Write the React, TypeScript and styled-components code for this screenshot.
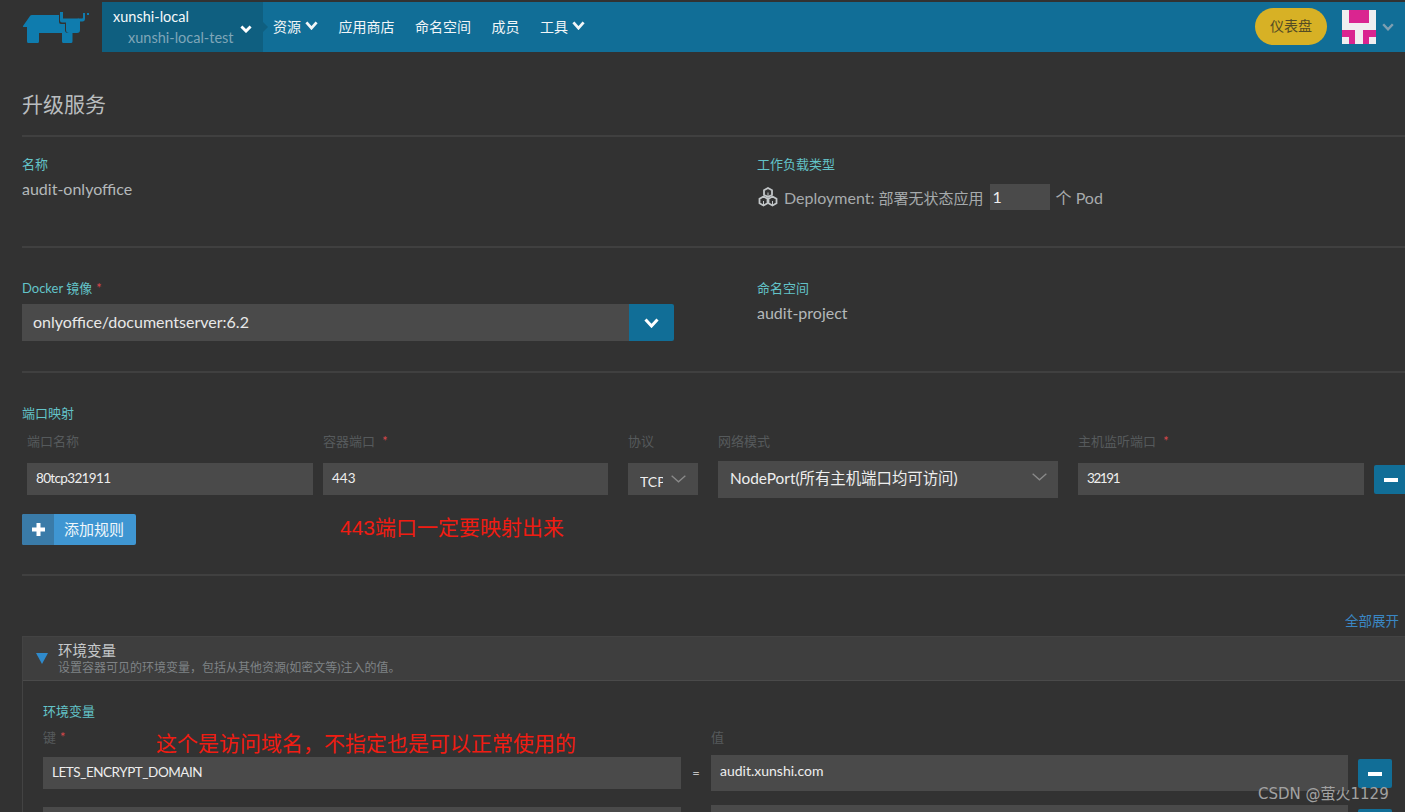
import React from 'react';
import styled, { createGlobalStyle } from 'styled-components';

const FONT = `Lato, "Noto Sans CJK SC", sans-serif`;

const GlobalStyle = createGlobalStyle`
  html, body {
    margin: 0;
    height: 812px;
    overflow: hidden;
    background: #323232;
    font-family: ${FONT};
  }
  * { box-sizing: border-box; }
`;

const Page = styled.div`
  position: relative;
  width: 1405px;
  height: 812px;
  overflow: hidden;
  padding-top: 2px;
`;

const Header = styled.header`
  display: flex;
  height: 50px;
`;

const LogoBox = styled.div`
  width: 102px;
  padding: 10px 0 0 22px;
`;

const Bar = styled.div`
  flex: 1;
  display: flex;
  align-items: center;
  background: #116e97;
  color: #fff;
  padding-right: 11px;
`;

const Cluster = styled.div`
  position: relative;
  width: 161px;
  height: 100%;
  background: #0f5f80;
  padding: 6px 0 0 11px;
  &::after {
    content: '';
    position: absolute;
    right: -5px;
    top: 20px;
    border-left: 5px solid #0f5f80;
    border-top: 5px solid transparent;
    border-bottom: 5px solid transparent;
  }
`;

const ClusterName = styled.div`
  font-size: 14.5px;
  line-height: 17px;
  color: #f4f8fa;
`;

const ProjectName = styled.div`
  font-size: 14.5px;
  line-height: 17px;
  margin: 4px 0 0 15px;
  color: #7fa6b8;
`;

const ClusterCaret = styled.span`
  position: absolute;
  left: 138px;
  top: 23px;
  display: flex;
  color: #fff;
`;

const Nav = styled.nav`
  display: flex;
  align-items: center;
  gap: 20.500px;
  margin: 0 0 3px 10px;
  flex: 1;
`;

const NavItem = styled.span`
  display: flex;
  align-items: center;
  gap: 4px;
  font-size: 14px;
  color: #f2f6f8;
`;

const Dashboard = styled.span`
  width: 72px;
  height: 37px;
  border-radius: 19px;
  background: #d7b125;
  color: #544c24;
  font-size: 14px;
  display: flex;
  align-items: center;
  justify-content: center;
  margin-bottom: 1px;
  padding-bottom: 3px;
`;

const AvatarBox = styled.div`
  width: 34px;
  height: 34px;
  margin-left: 15px;
`;

const UserCaret = styled.span`
  display: flex;
  margin-left: 6px;
  color: #7e9fb1;
`;

const Main = styled.main`
  padding-left: 22px;
`;

const TitleBlock = styled.div`
  height: 85px;
  padding-top: 39px;
  border-bottom: 2px solid #404040;
  font-size: 21px;
  line-height: 26px;
  color: #b9bdbf;
`;

const Row = styled.section<{ $height: number; $top: number }>`
  display: grid;
  grid-template-columns: 735px 1fr;
  align-content: start;
  height: ${p => p.$height}px;
  padding-top: ${p => p.$top}px;
  border-bottom: 2px solid #404040;
`;

const Label = styled.div`
  font-size: 13px;
  line-height: 18px;
  color: #63c3c8;
`;

const Required = styled.span`
  color: #d9484c;
  margin-left: 4px;
`;

const Value = styled.div`
  margin-top: 6px;
  font-size: 16px;
  line-height: 20px;
  color: #b4b8ba;
`;

const WorkloadLine = styled.div`
  display: flex;
  align-items: center;
  margin-top: 11px;
  height: 26px;
  font-size: 16px;
  color: #a7abad;
  white-space: pre;
`;

const WorkloadCjk = styled.span`
  font-size: 15px;
`;

const ScaleInput = styled.div`
  width: 60px;
  height: 26px;
  margin: 0 6px;
  padding-left: 3px;
  line-height: 26px;
  background: #4a4a4a;
  color: #eee;
`;

const WorkloadIcon = styled.svg`
  margin: 0 6px 0 1px;
`;

const ImagePicker = styled.div`
  display: flex;
  width: 652px;
  height: 37px;
  margin-top: 7px;
`;

const ImageInput = styled.div`
  flex: 1;
  padding-left: 11px;
  line-height: 35px;
  font-size: 16px;
  color: #e8e8e8;
  background: #4a4a4a;
`;

const ImageCaret = styled.span`
  width: 45px;
  display: flex;
  align-items: center;
  justify-content: center;
  color: #fff;
  background: #116e97;
  border-radius: 0 2px 2px 0;
`;

const PortSection = styled.section`
  height: 203px;
  padding-top: 31px;
  border-bottom: 2px solid #404040;
`;

const PortGrid = styled.div`
  display: grid;
  grid-template-columns: 286px 285px 80px 350px 296px 34px;
  column-gap: 10px;
  align-items: start;
  padding-left: 5px;
  margin-top: 10px;
  width: 1400px;
`;

const ColHead = styled.div<{ $wide?: boolean; $height: number }>`
  height: ${p => p.$height}px;
  font-size: 13px;
  line-height: 18px;
  color: #565a5c;
  margin-left: ${p => (p.$wide ? 10 : 0)}px;
`;

const Field = styled.div<{ $wide?: boolean; $tall?: boolean; $tracking?: number }>`
  position: relative;
  height: ${p => (p.$tall ? 37 : 32)}px;
  margin-top: ${p => (p.$tall ? -2 : 0)}px;
  margin-left: ${p => (p.$wide ? 10 : 0)}px;
  padding-left: ${p => (p.$tall ? 12 : 9)}px;
  font-size: ${p => (p.$tall ? 15.4 : 13.5)}px;
  line-height: ${p => (p.$tall ? 35 : 30)}px;
  letter-spacing: ${p => p.$tracking ?? 0}px;
  color: #eee;
  background: #4a4a4a;
  overflow: hidden;
  white-space: nowrap;
`;

const SelectCaret = styled.span<{ $right: number }>`
  position: absolute;
  right: ${p => p.$right}px;
  top: 12px;
  display: flex;
  color: #8a8a8a;
`;

const TcpText = styled.span`
  display: block;
  width: 23px;
  margin-left: 3px;
  overflow: hidden;
  font-size: 14px;
  line-height: 37px;
`;

const MinusButton = styled.button`
  display: flex;
  align-items: center;
  justify-content: center;
  width: 34px;
  height: 29px;
  margin-top: 2px;
  padding: 0;
  border: none;
  border-radius: 2px;
  background: #116e97;
  &::before {
    content: '';
    width: 14px;
    height: 4px;
    background: #fff;
  }
`;

const AddButton = styled.button`
  display: flex;
  width: 114px;
  height: 31px;
  margin-top: 16px;
  padding: 0;
  border: none;
  border-radius: 2px;
  overflow: hidden;
  background: #3f96d2;
  color: #f0f6fa;
  font-family: inherit;
  font-size: 15px;
`;

const AddIcon = styled.span`
  width: 32px;
  height: 100%;
  display: flex;
  align-items: center;
  justify-content: center;
  background: #3a7ba8;
  color: #fff;
`;

const AddLabel = styled.span`
  flex: 1;
  line-height: 31px;
  padding-right: 2px;
`;

const ExpandRow = styled.div`
  height: 60px;
  padding: 35px 6px 0 0;
  text-align: right;
  font-size: 13.5px;
  line-height: 20px;
  color: #3a87c4;
`;

const Accordion = styled.section`
  border: 1px solid #434343;
  border-right: none;
  height: 300px;
`;

const AccordionHead = styled.div`
  display: flex;
  align-items: center;
  height: 44px;
  background: #3e3e3e;
  border-bottom: 1px solid #4a4a4a;
`;

const Triangle = styled.span`
  width: 0;
  height: 0;
  margin: 0 10px 0 13px;
  border-top: 11px solid #2f8acb;
  border-left: 6px solid transparent;
  border-right: 6px solid transparent;
`;

const HeadTitle = styled.div`
  font-size: 14.5px;
  line-height: 18px;
  color: #c6c9cb;
`;

const HeadSub = styled.div`
  font-size: 12px;
  line-height: 15px;
  color: #7f8386;
`;

const AccordionBody = styled.div`
  padding: 21px 0 0 20px;
`;

const EnvHeadRow = styled.div`
  display: grid;
  grid-template-columns: 638px 30px 637px;
  margin-top: 8px;
`;

const EnvRow = styled.div`
  display: grid;
  grid-template-columns: 638px 30px 637px 44px;
  align-items: start;
  height: 50px;
`;

const KeyInput = styled.div`
  height: 32px;
  margin-top: 2px;
  padding-left: 9px;
  font-size: 13.5px;
  line-height: 30px;
  letter-spacing: -0.46px;
  color: #eee;
  background: #4a4a4a;
`;

const Equals = styled.div`
  margin-top: 2px;
  line-height: 32px;
  text-align: center;
  font-size: 13px;
  color: #c0c0c0;
`;

const ValueInput = styled.div`
  height: 36px;
  padding-left: 9px;
  font-size: 14px;
  line-height: 32px;
  color: #eee;
  background: #4a4a4a;
`;

const EnvMinus = styled(MinusButton)`
  margin: 4px 0 0 10px;
`;

const Note = styled.div<{ $left: number; $top: number }>`
  position: absolute;
  left: ${p => p.$left}px;
  top: ${p => p.$top}px;
  font-size: 21px;
  line-height: 28px;
  color: #f01c12;
  font-family: "Liberation Sans", "Noto Sans CJK SC", sans-serif;
  white-space: nowrap;
`;

const Watermark = styled.div`
  position: absolute;
  left: 1258px;
  top: 784px;
  font-family: "DejaVu Sans", "Noto Sans CJK SC", sans-serif;
  font-size: 15px;
  line-height: 20px;
  color: #a2a2a2;
  white-space: nowrap;
`;

const Chevron = ({ w, h, sw }: { w: number; h: number; sw: number }) => (
  <svg width={w} height={h} viewBox={`0 0 ${w} ${h}`} fill="none" stroke="currentColor" strokeWidth={sw} style={{ display: 'block' }}>
    <path d={`M${sw / 2} ${sw / 2} L${w / 2} ${h - sw / 2 - 0.5} L${w - sw / 2} ${sw / 2}`} />
  </svg>
);

const Logo = () => (
  <svg width="67" height="32" viewBox="0 0 67 32" fill="#0f7cae" style={{ display: 'block' }}>
    <path d="M1 14 8 4Q8.500 3 10 3H37V10Q37 12 39 12H43V18Q43 21 46 21H50.500V29.500Q50.500 31 49 31H41.500Q40 31 40 29.500V21H17V29.500Q17 31 15.500 31H6.500Q5 31 5 29.500V15H1.500Q.5 15 1 14Z" />
    <path d="M38 0H41V6.500H55.500Q56.500 6.500 56.500 5.500V6.500H58V18Q58 21 55 21H47Q44 21 44 18V10.500H40Q38 10.500 38 8.500Z" />
    <path d="M58 6.500H60Q61 6.500 61 5.500V1H63V6.500Q63 9.500 60.500 9.500H58Z" />
    <rect x="65" y="1" width="2" height="2" />
  </svg>
);

const Avatar = () => (
  <svg width="34" height="34" viewBox="0 0 34 34" style={{ display: 'block' }}>
    <rect width="34" height="34" fill="#f0eef0" />
    <rect x="7" width="20" height="13" fill="#da2590" />
    <rect y="20" width="13" height="7" fill="#da2590" />
    <rect x="7" y="27" width="6" height="7" fill="#da2590" />
    <rect x="21" y="20" width="13" height="7" fill="#da2590" />
    <rect x="21" y="27" width="6" height="7" fill="#da2590" />
  </svg>
);

const Hexes = () => (
  <WorkloadIcon width="20" height="20" viewBox="0 0 20 20" fill="none" stroke="#c2c6c8" strokeWidth="1.800">
    <path d="M10 1 14 3.300V7.700L10 10 6 7.700V3.300Z" />
    <path d="M5.500 9.500 9.500 11.800V16.200L5.500 18.500 1.500 16.200V11.800Z" />
    <path d="M14.500 9.500 18.500 11.800V16.200L14.500 18.500 10.500 16.200V11.800Z" />
    <path d="M10 5.500V10M5.500 14V18.500M14.500 14V18.500" strokeWidth="1" />
  </WorkloadIcon>
);

const PlusIcon = () => (
  <svg width="13" height="13" viewBox="0 0 13 13" fill="currentColor" style={{ display: 'block' }}>
    <path d="M4.500 0H8.500V4.500H13V8.500H8.500V13H4.500V8.500H0V4.500H4.500Z" />
  </svg>
);

export default function App() {
  return (
    <Page>
      <GlobalStyle />
      <Header>
        <LogoBox>
          <Logo />
        </LogoBox>
        <Bar>
          <Cluster>
            <ClusterName>xunshi-local</ClusterName>
            <ProjectName>xunshi-local-test</ProjectName>
            <ClusterCaret>
              <Chevron w={12} h={8} sw={2.800} />
            </ClusterCaret>
          </Cluster>
          <Nav>
            <NavItem>
              资源
              <Chevron w={13} h={9} sw={2.800} />
            </NavItem>
            <NavItem>应用商店</NavItem>
            <NavItem>命名空间</NavItem>
            <NavItem>成员</NavItem>
            <NavItem>
              工具
              <Chevron w={13} h={9} sw={2.800} />
            </NavItem>
          </Nav>
          <Dashboard>仪表盘</Dashboard>
          <AvatarBox>
            <Avatar />
          </AvatarBox>
          <UserCaret>
            <Chevron w={12} h={8} sw={2.400} />
          </UserCaret>
        </Bar>
      </Header>
      <Main>
        <TitleBlock>升级服务</TitleBlock>
        <Row $height={111} $top={18}>
          <div>
            <Label>名称</Label>
            <Value>audit-onlyoffice</Value>
          </div>
          <div>
            <Label>工作负载类型</Label>
            <WorkloadLine>
              <Hexes />
              Deployment: <WorkloadCjk>部署无状态应用</WorkloadCjk>
              <ScaleInput>1</ScaleInput>
              个 Pod
            </WorkloadLine>
          </div>
        </Row>
        <Row $height={125} $top={31}>
          <div>
            <Label>
              Docker 镜像<Required>*</Required>
            </Label>
            <ImagePicker>
              <ImageInput>onlyoffice/documentserver:6.2</ImageInput>
              <ImageCaret>
                <Chevron w={15} h={10} sw={3} />
              </ImageCaret>
            </ImagePicker>
          </div>
          <div>
            <Label>命名空间</Label>
            <Value>audit-project</Value>
          </div>
        </Row>
        <PortSection>
          <Label>端口映射</Label>
          <PortGrid>
            <ColHead $height={31}>端口名称</ColHead>
            <ColHead $height={31}>
              容器端口<Required>&nbsp;*</Required>
            </ColHead>
            <ColHead $height={31} $wide>协议</ColHead>
            <ColHead $height={31} $wide>网络模式</ColHead>
            <ColHead $height={31} $wide>
              主机监听端口<Required>&nbsp;*</Required>
            </ColHead>
            <span />
            <Field $tracking={-0.65}>80tcp321911</Field>
            <Field>443</Field>
            <Field $wide>
              <TcpText>TCP</TcpText>
              <SelectCaret $right={12}>
                <Chevron w={15} h={8} sw={1.300} />
              </SelectCaret>
            </Field>
            <Field $wide $tall>
              NodePort(所有主机端口均可访问)
              <SelectCaret $right={11}>
                <Chevron w={15} h={8} sw={1.300} />
              </SelectCaret>
            </Field>
            <Field $wide $tracking={-1.400}>32191</Field>
            <MinusButton />
          </PortGrid>
          <AddButton>
            <AddIcon>
              <PlusIcon />
            </AddIcon>
            <AddLabel>添加规则</AddLabel>
          </AddButton>
        </PortSection>
        <ExpandRow>全部展开</ExpandRow>
        <Accordion>
          <AccordionHead>
            <Triangle />
            <div>
              <HeadTitle>环境变量</HeadTitle>
              <HeadSub>设置容器可见的环境变量，包括从其他资源(如密文等)注入的值。</HeadSub>
            </div>
          </AccordionHead>
          <AccordionBody>
            <Label>环境变量</Label>
            <EnvHeadRow>
              <ColHead $height={27}>
                键<Required>*</Required>
              </ColHead>
              <span />
              <ColHead $height={27}>值</ColHead>
            </EnvHeadRow>
            <EnvRow>
              <KeyInput>LETS_ENCRYPT_DOMAIN</KeyInput>
              <Equals>=</Equals>
              <ValueInput>audit.xunshi.com</ValueInput>
              <EnvMinus />
            </EnvRow>
            <EnvRow>
              <KeyInput />
              <Equals />
              <ValueInput />
              <EnvMinus />
            </EnvRow>
          </AccordionBody>
        </Accordion>
      </Main>
      <Note $left={340} $top={514}>443端口一定要映射出来</Note>
      <Note $left={156} $top={730}>这个是访问域名，不指定也是可以正常使用的</Note>
      <Watermark>CSDN @萤火1129</Watermark>
    </Page>
  );
}
